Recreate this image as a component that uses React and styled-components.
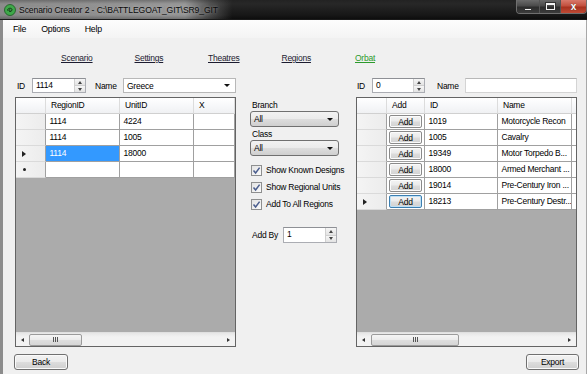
import styled, { createGlobalStyle } from "styled-components";

const GlobalStyle = createGlobalStyle`
  html, body {
    margin: 0;
    padding: 0;
    background: #f0f0f0;
  }
  body {
    font-family: "Liberation Sans", Arial, sans-serif;
    font-size: 8.5px;
    letter-spacing: -0.25px;
    color: #000;
    overflow: hidden;
  }
  * { box-sizing: border-box; }
`;

const Window = styled.div`
  width: 587px;
  height: 374px;
  display: flex;
  flex-direction: column;
  overflow: hidden;
`;

const TitleBar = styled.div`
  height: 20px;
  flex: none;
  display: flex;
  align-items: flex-start;
  padding-left: 4px;
  background:
    linear-gradient(to bottom, rgba(0,0,0,0.25) 0, rgba(0,0,0,0) 4px, rgba(0,0,0,0) 15px, rgba(0,0,0,0.3) 20px),
    linear-gradient(to right, rgba(165,165,165,0.8) 0, rgba(172,172,172,0.85) 185px, rgba(120,120,120,0.55) 210px, rgba(0,0,0,0) 232px),
    linear-gradient(to bottom, #2e2e2e 0%, #202020 45%, #121212 100%);
  border-bottom: 1px solid #1a1a1a;
`;

const AppIcon = styled.svg`
  width: 12px;
  height: 12px;
  margin-top: 4px;
  flex: none;
`;

const TitleText = styled.span`
  margin-left: 3px;
  margin-top: 5px;
  font-size: 8.6px;
  letter-spacing: -0.1px;
  color: #0a0a0a;
  text-shadow: 0 0 3px rgba(210,210,210,0.6);
  white-space: nowrap;
`;

const Controls = styled.div`
  margin-left: auto;
  display: flex;
  height: 14px;
  border: 1px solid #6f6f6f;
  border-top: none;
  border-radius: 0 0 4px 4px;
  overflow: hidden;
`;

const CtlButton = styled.div`
  width: ${(p) => p.$w}px;
  height: 100%;
  display: flex;
  align-items: center;
  justify-content: center;
  border-left: ${(p) => (p.$first ? "none" : "1px solid #555")};
  background: ${(p) =>
    p.$close
      ? "linear-gradient(to bottom, #d8796b 0%, #c3503e 45%, #a8321f 55%, #c04a35 100%)"
      : "linear-gradient(to bottom, #6a6a6a 0%, #4a4a4a 45%, #2c2c2c 55%, #3c3c3c 100%)"};
`;

const MinIcon = styled.div`
  width: 8px;
  height: 3px;
  margin-top: 5px;
  background: #f4f4f4;
  border: 1px solid #333;
`;

const MaxIcon = styled.div`
  width: 9px;
  height: 7px;
  border: 1px solid #f4f4f4;
  border-top-width: 2px;
  box-shadow: 0 0 0 1px #333;
`;

const CloseIcon = styled.span`
  color: #fff;
  font-weight: bold;
  font-size: 10px;
  letter-spacing: 0;
  text-shadow: 0 0 1px #333;
`;

const Frame = styled.div`
  flex: 1;
  display: flex;
  flex-direction: column;
  border-left: 3px solid #8c8c8c;
  border-right: 1px solid #a8a8a8;
  box-shadow: inset 1px 0 0 #c8c8c8;
`;

const MenuBar = styled.div`
  height: 18px;
  flex: none;
  display: flex;
  align-items: center;
  gap: 15px;
  padding-left: 10px;
  background: linear-gradient(to bottom, #fdfdfd, #f4f4f4);
`;

const MenuItem = styled.span`
  font-size: 8.8px;
`;

const Body = styled.div`
  flex: 1;
  display: flex;
  flex-direction: column;
  padding: 15px 9px 0 12px;
  background: #f0f0f0;
`;

const Tabs = styled.div`
  display: grid;
  grid-template-columns: repeat(5, 73.5px);
  margin-left: 46px;
  height: 10px;
  line-height: 10px;
`;

const TabLink = styled.span`
  text-decoration: underline;
  color: ${(p) => (p.$active ? "#2c9a2c" : "#1c1c30")};
`;

const Main = styled.div`
  display: flex;
  margin-top: 15px;
`;

const SideColumn = styled.div`
  width: 221px;
  flex: none;
  display: flex;
  flex-direction: column;
  gap: 4px;
  margin-left: ${(p) => p.$ml || 0}px;
`;

const ControlRow = styled.div`
  display: flex;
  align-items: center;
  height: 15px;
`;

const Label = styled.span`
  width: ${(p) => p.$w}px;
  padding-left: ${(p) => p.$pl || 0}px;
  flex: none;
  white-space: nowrap;
`;

const NumBox = styled.div`
  width: ${(p) => p.$w}px;
  height: ${(p) => p.$h || 15}px;
  flex: none;
  display: flex;
  background: #fff;
  border: 1px solid #abadb3;
  border-top-color: #8e9095;
`;

const NumValue = styled.span`
  flex: 1;
  padding-left: 3px;
  line-height: 13px;
`;

const Spinner = styled.div`
  width: 11px;
  display: flex;
  flex-direction: column;
  border-left: 1px solid #d0d0d0;
`;

const SpinHalf = styled.div`
  flex: 1;
  display: flex;
  align-items: center;
  justify-content: center;
  background: linear-gradient(to bottom, #f6f6f6, #e3e3e3);
  border-bottom: ${(p) => (p.$top ? "1px solid #d0d0d0" : "none")};

  &::after {
    content: "";
    border-left: 2.5px solid transparent;
    border-right: 2.5px solid transparent;
    border-bottom: ${(p) => (p.$top ? "3px solid #444" : "none")};
    border-top: ${(p) => (p.$top ? "none" : "3px solid #444")};
  }
`;

const ComboWhite = styled.div`
  flex: 1;
  height: 15px;
  display: flex;
  align-items: center;
  justify-content: space-between;
  padding: 0 5px 0 3px;
  background: #fff;
  border: 1px solid #b8b8b8;
`;

const Arrow = styled.span`
  border-left: ${(p) => p.$s || 3}px solid transparent;
  border-right: ${(p) => p.$s || 3}px solid transparent;
  border-top: ${(p) => (p.$s ? p.$s - 0.5 : 3)}px solid #111;
`;

const TextBox = styled.div`
  flex: 1;
  height: 15px;
  background: #fff;
  border: 1px solid #d4d4d4;
  border-top-color: #b8b8b8;
`;

const Grid = styled.div`
  height: 250px;
  display: flex;
  flex-direction: column;
  border: 1px solid #646464;
  background: #ababab;
  overflow: hidden;
`;

const GridRow = styled.div`
  display: grid;
  grid-template-columns: ${(p) => p.$cols};
  height: 16px;
  flex: none;
`;

const HeadCell = styled.div`
  padding-left: 5px;
  line-height: 15px;
  white-space: nowrap;
  overflow: hidden;
  background: linear-gradient(to bottom, #ffffff 0%, #f7f8fa 50%, #f0f1f3 100%);
  border-right: 1px solid #dcdcdc;
  border-bottom: 1px solid #d0d0d0;
`;

const RowHead = styled.div`
  display: flex;
  align-items: center;
  padding-left: 6px;
  background: linear-gradient(to right, #f4f4f4, #ececec);
  border-right: 1px solid #a0a0a0;
  border-bottom: 1px solid #dadada;
`;

const CurrentMark = styled.span`
  border-top: 3.5px solid transparent;
  border-bottom: 3.5px solid transparent;
  border-left: 4px solid #222;
`;

const NewMark = styled.span`
  width: 3px;
  height: 3px;
  margin-left: 1px;
  border-radius: 50%;
  background: #222;
`;

const Cell = styled.div`
  padding-left: 3.5px;
  line-height: 15px;
  white-space: nowrap;
  overflow: hidden;
  background: ${(p) => (p.$selected ? "#3399ff" : "#fff")};
  color: ${(p) => (p.$selected ? "#fff" : "#000")};
  border-right: 1px solid #a0a0a0;
  border-bottom: 1px solid #a0a0a0;
`;

const ButtonCell = styled.div`
  display: flex;
  align-items: center;
  padding: 0 2px 0 2px;
  background: #fff;
  border-right: 1px solid #a0a0a0;
  border-bottom: 1px solid #a0a0a0;
`;

const CellButton = styled.div`
  flex: 1;
  height: 13px;
  display: flex;
  align-items: center;
  justify-content: center;
  border: 1px solid ${(p) => (p.$focused ? "#3c7fb1" : "#8a8a8a")};
  border-radius: 2px;
  background: linear-gradient(to bottom, #f4f4f4 0%, #ebebeb 45%, #dcdcdc 55%, #d2d2d2 100%);
  box-shadow: inset 0 0 0 1px ${(p) => (p.$focused ? "#bfe0f5" : "#fbfbfb")};
`;

const GridFill = styled.div`
  flex: 1;
  background: #ababab;
`;

const HScroll = styled.div`
  height: 14px;
  flex: none;
  display: flex;
  align-items: center;
  background: linear-gradient(to bottom, #e6e6e6, #f2f2f2 30%, #f2f2f2);
  border-top: 1px solid #e0e0e0;
`;

const ScrollArrow = styled.div`
  width: 13px;
  height: 100%;
  flex: none;
  display: flex;
  align-items: center;
  justify-content: center;
  margin-left: ${(p) => (p.$right ? "auto" : "0")};

  &::after {
    content: "";
    border-top: 2.5px solid transparent;
    border-bottom: 2.5px solid transparent;
    border-left: ${(p) => (p.$right ? "3px solid #333" : "none")};
    border-right: ${(p) => (p.$right ? "none" : "3px solid #333")};
  }
`;

const Thumb = styled.div`
  width: ${(p) => p.$w}px;
  height: 12px;
  margin-left: ${(p) => p.$offset}px;
  display: flex;
  align-items: center;
  justify-content: center;
  border: 1px solid #9b9b9b;
  border-radius: 2px;
  background: linear-gradient(to bottom, #f5f5f5 0%, #ececec 45%, #dedede 55%, #d6d6d6 100%);
`;

const Grip = styled.span`
  width: 5px;
  height: 5px;
  background: repeating-linear-gradient(to right, #555 0 1px, transparent 1px 2px);
`;

const Middle = styled.div`
  width: 90px;
  flex: none;
  margin-left: 14px;
  padding-top: 22px;
  display: flex;
  flex-direction: column;
`;

const FieldLabel = styled.span`
  padding-left: 2px;
  height: 10px;
  line-height: 10px;
  margin-top: ${(p) => p.$mt || 0}px;
  margin-bottom: 1px;
`;

const DropList = styled.div`
  width: 89px;
  height: 16px;
  display: flex;
  align-items: center;
  justify-content: space-between;
  padding: 0 5px 0 3px;
  border: 1px solid #707070;
  border-radius: 3px;
  background: linear-gradient(to bottom, #f2f2f2 0%, #ebebeb 48%, #dddddd 52%, #cfcfcf 100%);
`;

const Checks = styled.div`
  display: flex;
  flex-direction: column;
  gap: 5px;
  margin-top: 8px;
  padding-left: 1px;
`;

const CheckRow = styled.label`
  display: flex;
  align-items: center;
  gap: 4px;
  height: 12px;
  white-space: nowrap;
`;

const CheckBox = styled.span`
  width: 11px;
  height: 11px;
  flex: none;
  display: flex;
  align-items: center;
  justify-content: center;
  border: 1px solid #8e8f8f;
  background: linear-gradient(135deg, #e3e3e3, #fbfbfb);
`;

const AddByRow = styled.div`
  display: flex;
  align-items: center;
  margin-top: 17px;
  height: 16px;
`;

const Footer = styled.div`
  display: flex;
  justify-content: space-between;
  margin: 7px -2px 0 -1px;
`;

const PushButton = styled.div`
  width: ${(p) => p.$w}px;
  height: 16px;
  display: flex;
  align-items: center;
  justify-content: center;
  border: 1px solid #707070;
  border-radius: 3px;
  background: linear-gradient(to bottom, #f2f2f2 0%, #ebebeb 48%, #dddddd 52%, #cfcfcf 100%);
  box-shadow: inset 0 0 0 1px #fafafa;
`;

const leftCols = "30px 74px 74px 41px";
const rightCols = "30px 38px 73px 74px 4px";

const leftRows = [
  ["1114", "4224"],
  ["1114", "1005"],
  ["1114", "18000"],
];

const rightRows = [
  ["1019", "Motorcycle Recon"],
  ["1005", "Cavalry"],
  ["19349", "Motor Torpedo B..."],
  ["18000", "Armed Merchant ..."],
  ["19014", "Pre-Century Iron ..."],
  ["18213", "Pre-Century Destr..."],
];

const NumericUpDown = ({ value, w, h }) => (
  <NumBox $w={w} $h={h}>
    <NumValue>{value}</NumValue>
    <Spinner>
      <SpinHalf $top />
      <SpinHalf />
    </Spinner>
  </NumBox>
);

const ScrollBar = ({ offset, thumb }) => (
  <HScroll>
    <ScrollArrow />
    <Thumb $offset={offset} $w={thumb}>
      <Grip />
    </Thumb>
    <ScrollArrow $right />
  </HScroll>
);

const Check = ({ children }) => (
  <CheckRow>
    <CheckBox>
      <svg width="9" height="9" viewBox="0 0 9 9">
        <path d="M1.5 4.5 L3.6 7 L7.6 1.6" fill="none" stroke="#4b5e8e" strokeWidth="1.5" />
      </svg>
    </CheckBox>
    {children}
  </CheckRow>
);

export default function App() {
  return (
    <Window>
      <GlobalStyle />
      <TitleBar>
        <AppIcon viewBox="0 0 12 12">
          <circle cx="6" cy="6" r="5.5" fill="#3fa84a" stroke="#1d5a22" strokeWidth="0.8" />
          <path d="M3.5 6.5 C3.5 4 7.5 3.5 8 5.5 C8.3 7 6 8.3 5 7 C4.4 6 6 5.4 6.4 6.2" fill="none" stroke="#143016" strokeWidth="1" />
        </AppIcon>
        <TitleText>Scenario Creator 2 - C:\BATTLEGOAT_GIT\SR9_GIT</TitleText>
        <Controls>
          <CtlButton $w={22} $first>
            <MinIcon />
          </CtlButton>
          <CtlButton $w={21}>
            <MaxIcon />
          </CtlButton>
          <CtlButton $w={26} $close>
            <CloseIcon>x</CloseIcon>
          </CtlButton>
        </Controls>
      </TitleBar>
      <Frame>
        <MenuBar>
          <MenuItem>File</MenuItem>
          <MenuItem>Options</MenuItem>
          <MenuItem>Help</MenuItem>
        </MenuBar>
        <Body>
          <Tabs>
            <TabLink>Scenario</TabLink>
            <TabLink>Settings</TabLink>
            <TabLink>Theatres</TabLink>
            <TabLink>Regions</TabLink>
            <TabLink $active>Orbat</TabLink>
          </Tabs>
          <Main>
            <SideColumn>
              <ControlRow>
                <Label $w={17} $pl={2}>ID</Label>
                <NumericUpDown value="1114" w={54} />
                <Label $w={37} $pl={9}>Name</Label>
                <ComboWhite>
                  <span>Greece</span>
                  <Arrow />
                </ComboWhite>
              </ControlRow>
              <Grid>
                <GridRow $cols={leftCols}>
                  <HeadCell />
                  <HeadCell>RegionID</HeadCell>
                  <HeadCell>UnitID</HeadCell>
                  <HeadCell>X</HeadCell>
                </GridRow>
                {leftRows.map((r, i) => (
                  <GridRow key={i} $cols={leftCols}>
                    <RowHead>{i === 2 && <CurrentMark />}</RowHead>
                    <Cell $selected={i === 2}>{r[0]}</Cell>
                    <Cell>{r[1]}</Cell>
                    <Cell />
                  </GridRow>
                ))}
                <GridRow $cols={leftCols}>
                  <RowHead>
                    <NewMark />
                  </RowHead>
                  <Cell />
                  <Cell />
                  <Cell />
                </GridRow>
                <GridFill />
                <ScrollBar offset={0} thumb={53} />
              </Grid>
            </SideColumn>

            <Middle>
              <FieldLabel>Branch</FieldLabel>
              <DropList>
                <span>All</span>
                <Arrow $s={3.5} />
              </DropList>
              <FieldLabel $mt={2}>Class</FieldLabel>
              <DropList>
                <span>All</span>
                <Arrow $s={3.5} />
              </DropList>
              <Checks>
                <Check>Show Known Designs</Check>
                <Check>Show Regional Units</Check>
                <Check>Add To All Regions</Check>
              </Checks>
              <AddByRow>
                <Label $w={33} $pl={2}>Add By</Label>
                <NumericUpDown value="1" w={54} h={16} />
              </AddByRow>
            </Middle>

            <SideColumn $ml={16}>
              <ControlRow>
                <Label $w={16} $pl={1}>ID</Label>
                <NumericUpDown value="0" w={53} />
                <Label $w={40} $pl={12}>Name</Label>
                <TextBox />
              </ControlRow>
              <Grid>
                <GridRow $cols={rightCols}>
                  <HeadCell />
                  <HeadCell>Add</HeadCell>
                  <HeadCell>ID</HeadCell>
                  <HeadCell>Name</HeadCell>
                  <HeadCell />
                </GridRow>
                {rightRows.map((r, i) => (
                  <GridRow key={i} $cols={rightCols}>
                    <RowHead>{i === rightRows.length - 1 && <CurrentMark />}</RowHead>
                    <ButtonCell>
                      <CellButton $focused={i === rightRows.length - 1}>Add</CellButton>
                    </ButtonCell>
                    <Cell>{r[0]}</Cell>
                    <Cell>{r[1]}</Cell>
                    <Cell />
                  </GridRow>
                ))}
                <GridFill />
                <ScrollBar offset={1} thumb={88} />
              </Grid>
            </SideColumn>
          </Main>
          <Footer>
            <PushButton $w={54}>Back</PushButton>
            <PushButton $w={53}>Export</PushButton>
          </Footer>
        </Body>
      </Frame>
    </Window>
  );
}
